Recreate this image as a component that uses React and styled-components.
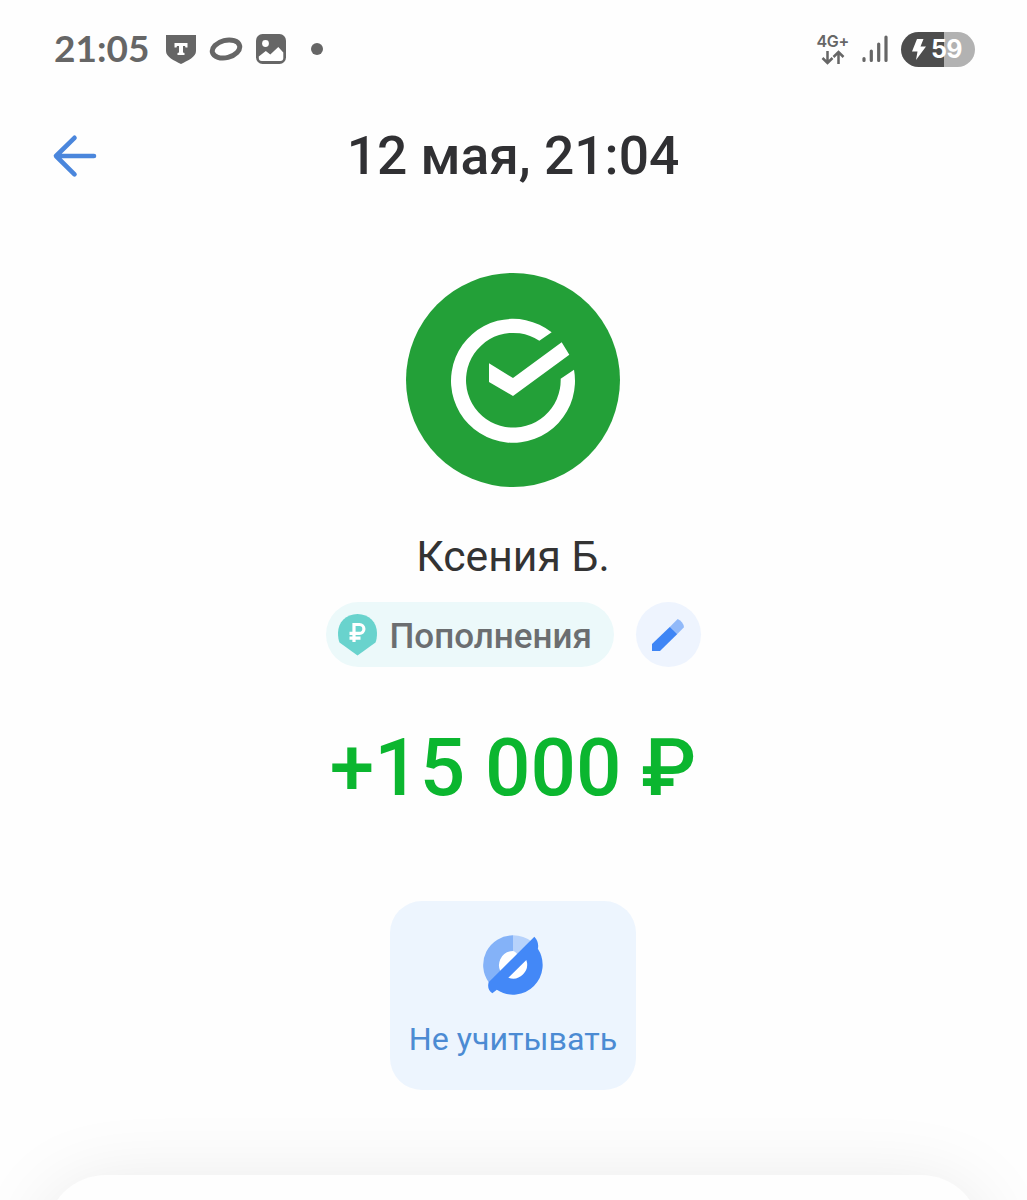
import React from 'react';
import styled, { createGlobalStyle } from 'styled-components';

const GlobalStyle = createGlobalStyle`
  * {
    box-sizing: border-box;
  }
  body {
    margin: 0;
    background: #fefefe;
    font-family: Roboto, "Noto Sans", sans-serif;
  }
`;

const Screen = styled.div`
  display: flex;
  flex-direction: column;
  align-items: center;
  width: 1027px;
  height: 1200px;
  padding-right: 1px;
  overflow: hidden;
  background: #fefefe;

  > * {
    flex: none;
  }
`;

const StatusBar = styled.div`
  display: flex;
  justify-content: space-between;
  align-items: center;
  width: 100%;
  height: 98px;
  padding: 0 51px 0 54px;
`;

const StatusGroup = styled.div`
  display: flex;
  align-items: center;
  gap: ${(p) => p.$gap}px;
`;

const Clock = styled.span`
  width: 99px;
  padding-bottom: 2px;
  font: 700 37px/44px Lato, sans-serif;
  color: #666;
`;

const Dot = styled.span`
  width: 12px;
  height: 12px;
  margin-left: 12px;
  border-radius: 50%;
  background: #666;
`;

const Network = styled.div`
  display: flex;
  flex-direction: column;
  align-items: center;
  font: 600 16px/17px Inter, sans-serif;
  letter-spacing: -0.3px;
  color: #666;
`;

const Battery = styled.div`
  display: flex;
  align-items: center;
  justify-content: center;
  gap: 5px;
  width: 74px;
  height: 35px;
  padding-right: 2px;
  border-radius: 18px;
  background: linear-gradient(90deg, #4d4d4d 43px, #b2b2b2 43px);
  font: 700 25px/35px Inter, sans-serif;
  letter-spacing: -0.5px;
  color: #fff;
`;

const Header = styled.header`
  display: grid;
  grid-template-columns: 100px 1fr 100px;
  align-items: center;
  width: 100%;
  height: 116px;
`;

const BackButton = styled.button`
  display: flex;
  padding: 0 0 0 52px;
  border: 0;
  background: none;
`;

const Title = styled.h1`
  margin: 0;
  font-size: 53.300px;
  font-weight: 500;
  line-height: 64px;
  text-align: center;
  white-space: nowrap;
  color: #303033;
`;

const Avatar = styled.div`
  height: 214px;
  margin-top: 59px;
`;

const Name = styled.div`
  margin-top: 43px;
  font-size: 42.700px;
  line-height: 52px;
  color: #333;
`;

const CategoryRow = styled.div`
  display: flex;
  gap: 22px;
  margin-top: 20px;
`;

const Category = styled.div`
  display: flex;
  align-items: center;
  gap: 13px;
  width: 288px;
  height: 65px;
  padding-left: 12px;
  border-radius: 33px;
  background: #ecf9fa;
  font-size: 35px;
  font-weight: 500;
  white-space: nowrap;
  color: #6b6e70;
`;

const CategoryLabel = styled.span`
  padding-top: 3px;
`;

const EditButton = styled.button`
  display: flex;
  align-items: center;
  justify-content: center;
  width: 65px;
  height: 65px;
  padding: 0;
  border: 0;
  border-radius: 50%;
  background: #eef4fe;
`;

const Amount = styled.div`
  margin-top: 53px;
  font-size: 80px;
  font-weight: 500;
  line-height: 96px;
  white-space: nowrap;
  color: #0bb62f;
`;

const ActionCard = styled.button`
  display: flex;
  flex-direction: column;
  align-items: center;
  width: 246px;
  height: 189px;
  margin-top: 85px;
  padding: 34px 0 0;
  border: 0;
  border-radius: 32px;
  background: #edf5fe;
  font: 400 32.200px/40px Roboto, sans-serif;
  white-space: nowrap;
  color: #4c8bd3;
`;

const ActionLabel = styled.span`
  margin-top: 24px;
`;

const Sheet = styled.section`
  width: 935px;
  height: 400px;
  margin-top: 85px;
  border-radius: 60px;
  background: #fefefe;
  box-shadow: 0 12px 80px rgba(0, 0, 0, 0.1);
`;

const ShieldIcon = () => (
  <svg width="30" height="30" viewBox="0 0 30 30">
    <path d="M0 1h30v16c0 6-8 9.500-15 13C8 26.500 0 23 0 17z" fill="#666" />
    <path d="M8.500 9h13v4.500h-2l-.5-1.500h-2v6.500l1.500.5v2h-7v-2l1.500-.5V12h-2l-.5 1.500h-2z" fill="#fff" />
  </svg>
);

const OrbitIcon = () => (
  <svg width="34" height="26" viewBox="0 0 34 26">
    <ellipse cx="17" cy="13" rx="14" ry="8.600" transform="rotate(-14 17 13)" fill="none" stroke="#666" strokeWidth="5" />
  </svg>
);

const PictureIcon = () => (
  <svg width="30" height="30" viewBox="0 0 30 30">
    <rect width="30" height="30" rx="6.500" fill="#666" />
    <circle cx="9.500" cy="9.500" r="3.400" fill="#fff" />
    <path d="M2.800 22.500l7-5.500 4.500 3.500 8-7.500 5 5.500V24q0 3-3 3H5.800q-3 0-3-3z" fill="#fff" />
  </svg>
);

const DataArrows = () => (
  <svg width="24" height="15" viewBox="0 0 24 15" fill="none" stroke="#666" strokeWidth="2.500">
    <path d="M6.500 1v12M1.500 8l5 5 5-5M17.500 14V2M12.500 7l5-5 5 5" />
  </svg>
);

const SignalIcon = () => (
  <svg width="26" height="28" viewBox="0 0 26 28" stroke="#666" strokeWidth="3.200" strokeLinecap="round">
    <path d="M2 23.500v2M9.300 16v9.500M16.700 9v16.500M24 2v23.500" />
  </svg>
);

const BoltIcon = () => (
  <svg width="14" height="21" viewBox="0 0 14 21">
    <path d="M5 0h6.500L8.500 7.500H14L4 21l1.500-8.500H0z" fill="#fff" />
  </svg>
);

const BackArrow = () => (
  <svg width="46" height="44" viewBox="0 0 46 44" fill="none" stroke="#4a86dc" strokeWidth="4.600" strokeLinecap="round" strokeLinejoin="round">
    <path d="M22.500 3.800L4 22l18.500 18.300M4 22h38" />
  </svg>
);

const BankLogo = () => (
  <svg width="214" height="214" viewBox="18 25 642 642">
    <circle cx="339" cy="346" r="321" fill="#23a038" />
    <path
      d="M455 203A186 186 0 1 0 522 315L482 342A142 142 0 1 1 418 228z"
      fill="#fff"
    />
    <path d="M267 296L339 340 485 233 508 270 339 394 267 352z" fill="#fff" />
  </svg>
);

const RubleBadge = () => (
  <svg width="39" height="42" viewBox="0 0 39 42">
    <path d="M19.500 0C31 0 39 8.500 39 19c0 4-.5 7-1.500 9.500L19.500 41.500 1.500 28.500C.5 26 0 23 0 19 0 8.500 8 0 19.500 0z" fill="#69d3cd" />
    <path d="M16 28V10.500h5.500a4.400 4.400 0 0 1 0 8.800h-10M11.500 24.200h11" fill="none" stroke="#fff" strokeWidth="3.200" />
  </svg>
);

const PencilIcon = () => (
  <svg width="32" height="32" viewBox="996 70 96 96">
    <path d="M996 166V145L1050 93 1072 115 1020 166z" fill="#3e85f5" />
    <path d="M1050 93L1073 70Q1090 78 1092 95L1072 115z" fill="#91b9f9" />
  </svg>
);

const ExcludeIcon = () => (
  <svg width="60" height="60" viewBox="307 136 180 180">
    <circle cx="397" cy="226" r="42" fill="#fff" />
    <path d="M397 137A89 89 0 0 0 325 279L366 254A42 42 0 0 1 397 184z" fill="#84b2f8" />
    <path d="M397 137q32 0 58 20L412 198q-6-12-15-14z" fill="#b7d2fb" />
    <path
      fillRule="evenodd"
      d="M461 141L324 278Q318 298 335 311L348.500 300.600A89 89 0 0 0 471.600 177.500Q476 157 461 141zM437 211L383 264A42 42 0 0 0 437 211z"
      fill="#4388f7"
    />
  </svg>
);

const App = () => {
  return (
    <Screen>
      <GlobalStyle />
      <StatusBar>
        <StatusGroup $gap={13}>
          <Clock>21:05</Clock>
          <ShieldIcon />
          <OrbitIcon />
          <PictureIcon />
          <Dot />
        </StatusGroup>
        <StatusGroup $gap={13}>
          <Network>
            <span>4G+</span>
            <DataArrows />
          </Network>
          <SignalIcon />
          <Battery>
            <BoltIcon />
            59
          </Battery>
        </StatusGroup>
      </StatusBar>

      <Header>
        <BackButton aria-label="Назад">
          <BackArrow />
        </BackButton>
        <Title>12 мая, 21:04</Title>
      </Header>

      <Avatar>
        <BankLogo />
      </Avatar>
      <Name>Ксения Б.</Name>

      <CategoryRow>
        <Category>
          <RubleBadge />
          <CategoryLabel>Пополнения</CategoryLabel>
        </Category>
        <EditButton aria-label="Изменить">
          <PencilIcon />
        </EditButton>
      </CategoryRow>

      <Amount>+15 000 ₽</Amount>

      <ActionCard>
        <ExcludeIcon />
        <ActionLabel>Не учитывать</ActionLabel>
      </ActionCard>

      <Sheet />
    </Screen>
  );
};

export default App;
